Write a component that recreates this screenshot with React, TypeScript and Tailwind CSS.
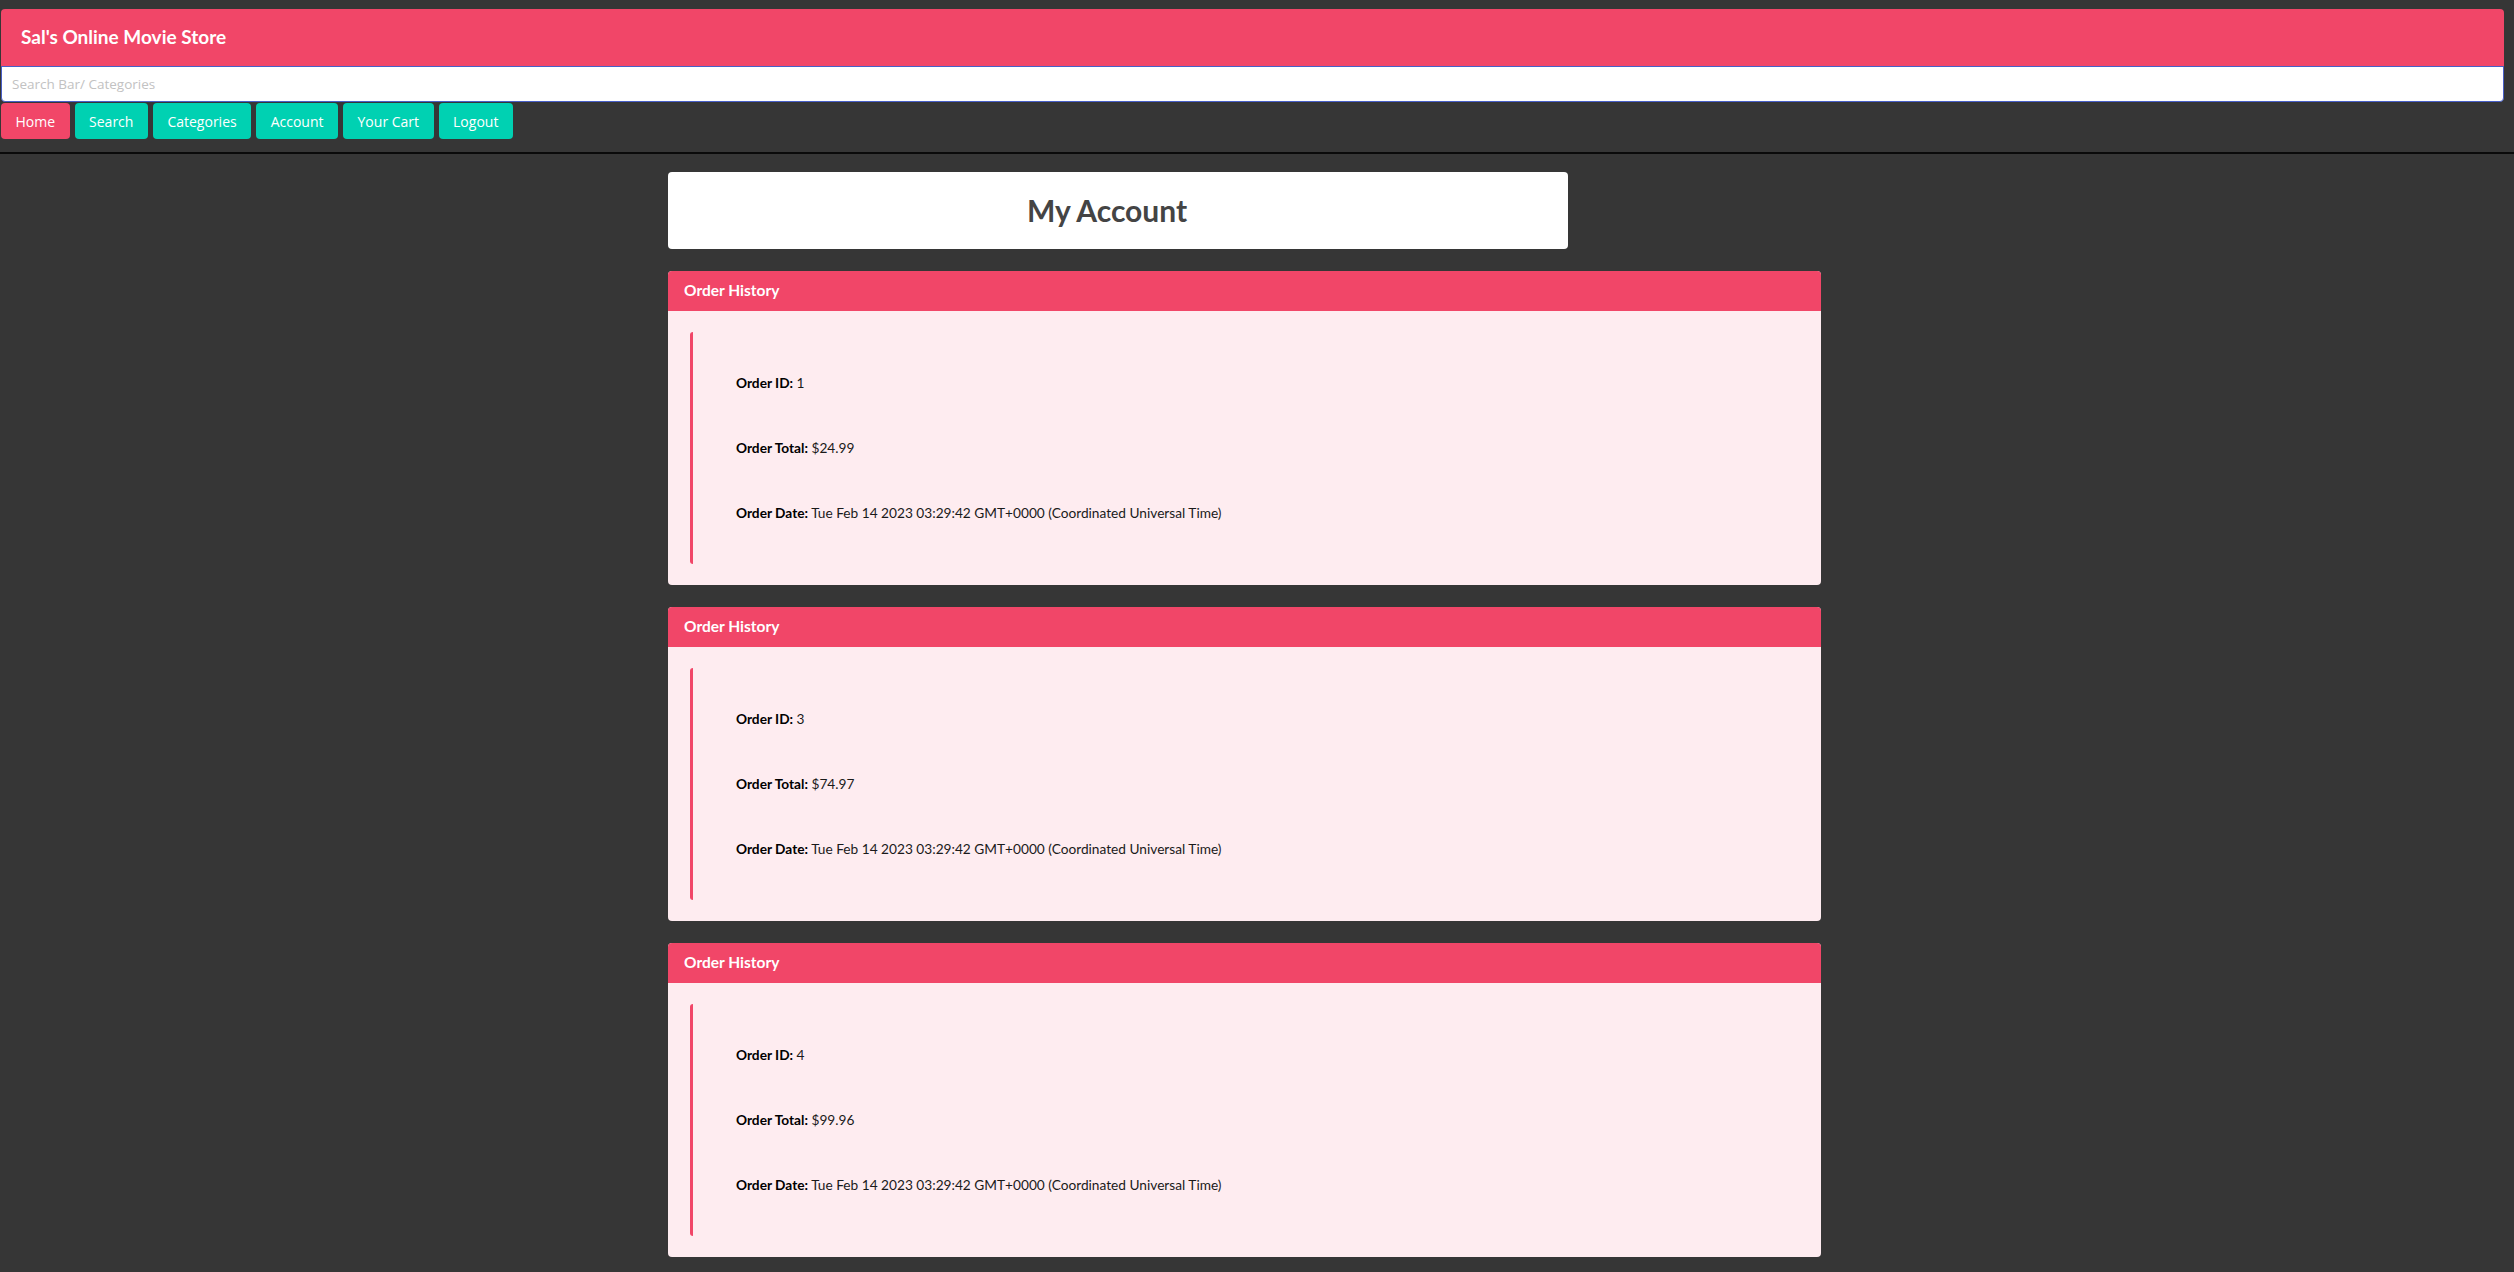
const orders = [
  { id: 1, total: '$24.99', date: 'Tue Feb 14 2023 03:29:42 GMT+0000 (Coordinated Universal Time)' },
  { id: 3, total: '$74.97', date: 'Tue Feb 14 2023 03:29:42 GMT+0000 (Coordinated Universal Time)' },
  { id: 4, total: '$99.96', date: 'Tue Feb 14 2023 03:29:42 GMT+0000 (Coordinated Universal Time)' },
]

const navItems = ['Home', 'Search', 'Categories', 'Account', 'Your Cart', 'Logout']

function OrderCard({ id, total, date }: { id: number; total: string; date: string }) {
  return (
    <div className="overflow-hidden rounded-[4px] bg-[#feecf0]">
      <div className="flex h-[40px] items-center bg-[#f14668] px-[16px] text-[15.5px] font-bold text-white">
        Order History
      </div>
      <div className="px-[22px] py-[21px]">
        <div className="flex flex-col gap-[45px] rounded-[3px] border-l-[3px] border-[#f14668] py-[41px] pl-[43px] text-[13.7px] leading-[20px] text-[#1a1a1a]">
          <p>
            <span className="font-bold text-black">Order ID:</span> {id}
          </p>
          <p>
            <span className="font-bold text-black">Order Total:</span> {total}
          </p>
          <p>
            <span className="font-bold text-black">Order Date:</span> {date}
          </p>
        </div>
      </div>
    </div>
  )
}

export default function App() {
  return (
    <div className="min-h-screen bg-[#363636] pb-[8px] font-['Lato',sans-serif]">
      <div className="pl-px pr-[10px] pt-[9px]">
        {/* Banner */}
        <div className="flex h-[57px] items-center rounded-t-[4px] bg-[#f14668] px-[20px] text-[19px] font-bold text-white">
          Sal's Online Movie Store
        </div>
        <input
          className="block h-[36px] w-full rounded-b-[4px] border border-[#485fc7] bg-white px-[10px] font-['Open_Sans',sans-serif] text-[13.5px] text-[#363636] outline-none placeholder:text-[#c2c2c2]"
          placeholder="Search Bar/ Categories"
        />
        {/* Nav buttons */}
        <div className="mt-px flex gap-[5px] font-['Open_Sans',sans-serif]">
          {navItems.map((item, i) => (
            <button
              key={item}
              className={`h-[36px] rounded-[4px] px-[14.5px] text-[14px] text-white ${
                i === 0 ? 'bg-[#f14668]' : 'bg-[#00d1b2]'
              }`}
            >
              {item}
            </button>
          ))}
        </div>
      </div>

      <div className="mt-[13px] h-[2px] bg-[#0a0a0a]" />

      <div className="flex justify-center pr-[25px]">
        <div className="mt-[18px] flex w-[1153px] flex-col gap-[22px]">
          <div className="flex h-[77px] w-[900px] items-center justify-center rounded-[4px] bg-white pr-[22px] text-[30px] font-bold text-[#444444]">
            My Account
          </div>
          {orders.map((o) => (
            <OrderCard key={o.id} {...o} />
          ))}
        </div>
      </div>
    </div>
  )
}
